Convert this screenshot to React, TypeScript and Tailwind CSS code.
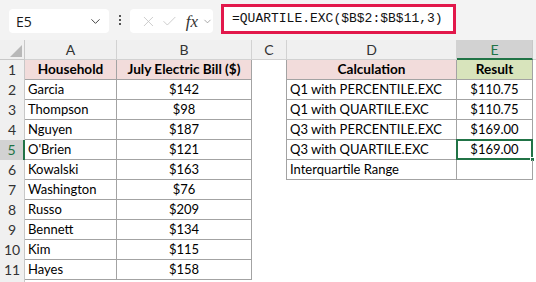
import { ChevronDown, X, Check } from "lucide-react"

const colA = ["Household", "Garcia", "Thompson", "Nguyen", "O'Brien", "Kowalski", "Washington", "Russo", "Bennett", "Kim", "Hayes"]
const colB = ["July Electric Bill ($)", "$142", "$98", "$187", "$121", "$163", "$76", "$209", "$134", "$115", "$158"]
const colD = ["Calculation", "Q1 with PERCENTILE.EXC", "Q1 with QUARTILE.EXC", "Q3 with PERCENTILE.EXC", "Q3 with QUARTILE.EXC", "Interquartile Range"]
const colE = ["Result", "$110.75", "$110.75", "$169.00", "$169.00", ""]

const line = "border-[#a3a3a3]"

export default function App() {
  return (
    <div className="w-[536px] h-[282px] overflow-hidden bg-white text-black font-['Lato','Liberation_Sans',sans-serif]">
      {/* Formula bar */}
      <div className="h-[40px] bg-[#f3f3f3] flex items-start">
        <div className="ml-[9px] mt-[9px] w-[100px] h-[24px] bg-white rounded-[4px] flex items-center justify-between pl-[7px] pr-[6px]">
          <span className="text-[14px] font-['Open_Sans',sans-serif] text-[#1a1a1a]">E5</span>
          <ChevronDown className="w-[15px] h-[15px] text-[#444]" strokeWidth={1.6} />
        </div>
        <div className="w-[21px] h-[40px] flex flex-col items-center justify-center gap-[2px]">
          <span className="w-[2px] h-[2px] bg-[#555]" />
          <span className="w-[2px] h-[2px] bg-[#555]" />
          <span className="w-[2px] h-[2px] bg-[#555]" />
        </div>
        <div className="mt-[9px] w-[83px] h-[24px] bg-white rounded-[4px] flex items-center pl-[10px] gap-[4px]">
          <X className="w-[17px] h-[17px] text-[#c4c4c4]" strokeWidth={1.2} />
          <Check className="w-[17px] h-[17px] text-[#c4c4c4]" strokeWidth={1.2} />
          <span className="font-['Liberation_Serif',serif] italic text-[17px] text-[#333] leading-none ml-[4px]">fx</span>
          <ChevronDown className="w-[11px] h-[11px] text-[#888]" strokeWidth={1.6} />
        </div>
        <div className="ml-[8px] mt-[4px] w-[235px] h-[30px] bg-white border-[3px] border-[#e2184b] flex items-center pl-[8px]">
          <span className="font-['Liberation_Mono',monospace] text-[13px] text-[#111]">=QUARTILE.EXC($B$2:$B$11,3)</span>
        </div>
      </div>

      {/* Column headers */}
      <div className="flex h-[20px] bg-[#f0f0f0] text-[14px] text-[#333]">
        <div className="w-[25px] border-r border-b border-[#c8c8c8] relative">
          <svg className="absolute right-[2px] bottom-[2px]" width="12" height="12" viewBox="0 0 12 12">
            <polygon points="12,0 12,12 0,12" fill="#b8b8b8" />
          </svg>
        </div>
        <div className="w-[92px] border-r border-b border-[#d2d2d2] flex items-center justify-center">A</div>
        <div className="w-[135px] border-r border-b border-[#d2d2d2] flex items-center justify-center">B</div>
        <div className="w-[35px] border-r border-b border-[#d2d2d2] flex items-center justify-center">C</div>
        <div className="w-[170px] border-r border-b border-[#d2d2d2] flex items-center justify-center">D</div>
        <div className="w-[76px] bg-[#d2d2d2] border-r border-[#c8c8c8] border-b-2 border-b-[#217346] flex items-center justify-center text-[#217346]">E</div>
        <div className="flex-1 border-b border-[#d2d2d2]" />
      </div>

      {/* Rows */}
      {colA.map((a, i) => {
        const r = i + 1
        const sel = r === 5
        const hasRight = i < colD.length
        return (
          <div key={r} className={`flex h-[20px] leading-none whitespace-nowrap ${r === 1 ? "text-[13.6px]" : "text-[13px]"}`}>
            <div
              className={`w-[25px] flex items-center justify-center text-[14px] ${
                sel ? "bg-[#d2d2d2] text-[#217346] border-r-2 border-[#217346]" : "bg-[#f0f0f0] text-[#333] border-r border-[#c8c8c8]"
              }`}
            >
              {r}
            </div>
            <div
              className={`w-[92px] border-r border-b ${line} flex items-center ${
                r === 1 ? "justify-center font-bold bg-[#f2dcdb]" : "pl-[3px]"
              }`}
            >
              {a}
            </div>
            <div
              className={`w-[135px] border-r border-b ${line} flex items-center justify-center ${
                r === 1 ? "font-bold bg-[#f2dcdb]" : ""
              }`}
            >
              {colB[i]}
            </div>
            <div className={`w-[35px] ${hasRight ? `border-r ${line}` : ""}`} />
            {hasRight ? (
              <>
                <div
                  className={`w-[170px] border-r border-b ${line} flex items-center ${
                    r === 1 ? "justify-center font-bold bg-[#f2dcdb]" : "pl-[3px]"
                  }`}
                >
                  {colD[i]}
                </div>
                <div
                  className={`w-[76px] border-r border-b ${line} flex items-center justify-center relative ${
                    r === 1 ? "font-bold bg-[#d8e4bc]" : ""
                  }`}
                >
                  {colE[i]}
                  {sel && (
                    <>
                      <div className="absolute -left-[1px] -top-[1px] -right-[1px] -bottom-[1px] border-2 border-[#217346]" />
                      <div className="absolute -right-[3px] -bottom-[3px] w-[5px] h-[5px] bg-[#217346] border border-white" />
                    </>
                  )}
                </div>
              </>
            ) : null}
          </div>
        )
      })}
      <div className="flex h-[2px]">
        <div className="w-[25px] bg-[#f0f0f0] border-r border-[#c8c8c8]" />
      </div>
    </div>
  )
}
